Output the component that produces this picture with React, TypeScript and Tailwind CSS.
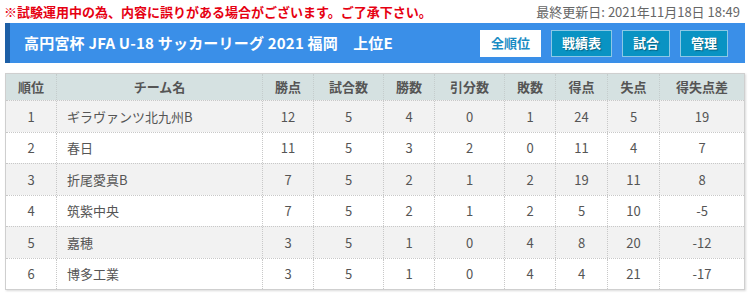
import React from 'react';

const COLS = [
  { label: '順位', w: 'w-[50px]', align: 'text-center' },
  { label: 'チーム名', w: 'w-[206px]', align: 'text-left pl-[10px]' },
  { label: '勝点', w: 'w-[51px]', align: 'text-center' },
  { label: '試合数', w: 'w-[70px]', align: 'text-center' },
  { label: '勝数', w: 'w-[51px]', align: 'text-center' },
  { label: '引分数', w: 'w-[70px]', align: 'text-center' },
  { label: '敗数', w: 'w-[51px]', align: 'text-center' },
  { label: '得点', w: 'w-[52px]', align: 'text-center' },
  { label: '失点', w: 'w-[52px]', align: 'text-center' },
  { label: '得失点差', w: 'flex-1', align: 'text-center' },
];

const ROWS: (string | number)[][] = [
  [1, 'ギラヴァンツ北九州B', 12, 5, 4, 0, 1, 24, 5, 19],
  [2, '春日', 11, 5, 3, 2, 0, 11, 4, 7],
  [3, '折尾愛真B', 7, 5, 2, 1, 2, 19, 11, 8],
  [4, '筑紫中央', 7, 5, 2, 1, 2, 5, 10, -5],
  [5, '嘉穂', 3, 5, 1, 0, 4, 8, 20, -12],
  [6, '博多工業', 3, 5, 1, 0, 4, 4, 21, -17],
];

const NAV = ['戦績表', '試合', '管理'];

export default function App() {
  return (
    <div className="w-[750px] h-[293px] bg-white overflow-hidden font-['Noto_Sans_CJK_JP',sans-serif] text-[13px] text-[#555]">
      <div className="flex justify-between items-center h-[22px] px-[4px] pt-[1px]">
        <p className="text-[#e60012] font-bold">※試験運用中の為、内容に誤りがある場合がございます。ご了承下さい。</p>
        <p className="text-[#666] pr-[6px]">最終更新日: 2021年11月18日 18:49</p>
      </div>

      <div className="mx-[5px] mt-[1px] h-[40px] bg-[#3a8fe8] border-l-[5px] border-[#1d5fa6] flex items-center justify-between pl-[14px] pr-[17px]">
        <h1 className="text-white font-bold text-[15px] tracking-[0.2px]">高円宮杯 JFA U-18 サッカーリーグ 2021 福岡　上位E</h1>
        <div className="flex gap-[10px]">
          <button className="h-[27px] w-[61px] bg-white text-[#1a8cc4] font-bold text-[13px]">全順位</button>
          {NAV.map((n) => (
            <button
              key={n}
              className={`h-[27px] ${n === '戦績表' ? 'w-[61px]' : 'w-[48px]'} bg-[#0993c3] border border-[#8cc8e6] text-white font-bold text-[13px] [text-shadow:1px_1px_1px_rgba(0,0,0,0.35)]`}
            >
              {n}
            </button>
          ))}
        </div>
      </div>

      <div className="mx-[5px] mt-[10px] border border-[#cfcfcf] shadow-[1px_1px_2px_rgba(0,0,0,0.15)]">
        <div className="flex h-[26px] bg-[#d5e1e1] font-bold items-center">
          {COLS.map((c, i) => (
            <div
              key={c.label}
              className={`${c.w} h-full flex items-center justify-center ${i > 0 ? 'border-l border-dotted border-[#c4cccc]' : ''}`}
            >
              {c.label}
            </div>
          ))}
        </div>
        {ROWS.map((r, ri) => (
          <div
            key={ri}
            className={`flex h-[31.5px] border-t border-dotted border-[#c8c8c8] ${ri % 2 === 0 ? 'bg-[#f2f2f2]' : 'bg-white'}`}
          >
            {r.map((v, i) => (
              <div
                key={i}
                className={`${COLS[i].w} ${COLS[i].align} h-full flex items-center ${i === 1 ? 'justify-start' : 'justify-center'} ${i > 0 ? 'border-l border-dotted border-[#c8c8c8]' : ''}`}
              >
                {v}
              </div>
            ))}
          </div>
        ))}
      </div>
    </div>
  );
}
